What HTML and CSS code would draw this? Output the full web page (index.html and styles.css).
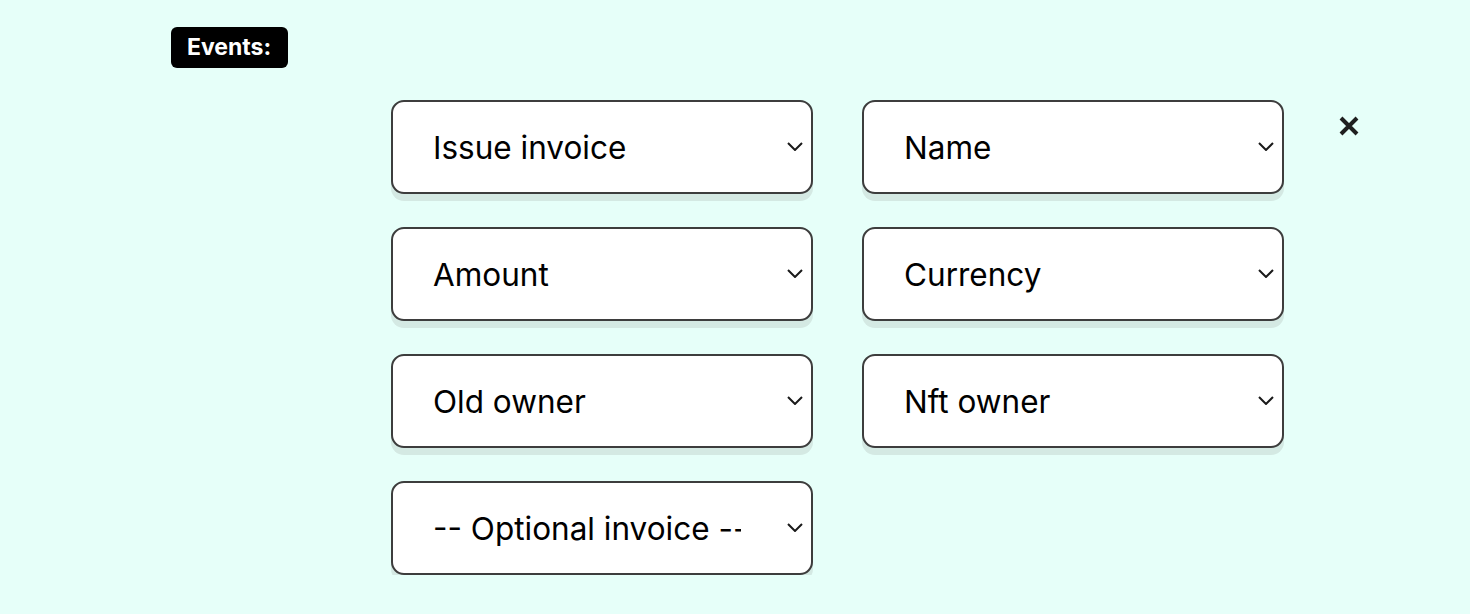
FILE: index.html
```html
<!DOCTYPE html>
<html lang="en">
<head>
<meta charset="utf-8">
<title>Events</title>
<link rel="stylesheet" href="styles.css">
</head>
<body>
<main class="page">
  <span class="badge">Events:</span>
  <div class="event-row">
    <div class="fields">
      <div class="field"><select class="select"><option>Issue invoice</option></select><svg class="chev" viewBox="0 0 16 9"><path d="M1 1l7 7 7-7"/></svg></div>
      <div class="field"><select class="select"><option>Name</option></select><svg class="chev" viewBox="0 0 16 9"><path d="M1 1l7 7 7-7"/></svg></div>
      <div class="field"><select class="select"><option>Amount</option></select><svg class="chev" viewBox="0 0 16 9"><path d="M1 1l7 7 7-7"/></svg></div>
      <div class="field"><select class="select"><option>Currency</option></select><svg class="chev" viewBox="0 0 16 9"><path d="M1 1l7 7 7-7"/></svg></div>
      <div class="field"><select class="select"><option>Old owner</option></select><svg class="chev" viewBox="0 0 16 9"><path d="M1 1l7 7 7-7"/></svg></div>
      <div class="field"><select class="select"><option>Nft owner</option></select><svg class="chev" viewBox="0 0 16 9"><path d="M1 1l7 7 7-7"/></svg></div>
      <div class="field"><select class="select"><option>-- Optional invoice --</option></select><svg class="chev" viewBox="0 0 16 9"><path d="M1 1l7 7 7-7"/></svg></div>
    </div>
    <button class="close" aria-label="Remove"><svg viewBox="0 0 22 22"><path d="M3 3l16 16M19 3L3 19"/></svg></button>
  </div>
</main>
</body>
</html>
```
FILE: styles.css
```css
html, body {
  margin: 0;
  background: #e6fff9;
}
.page {
  padding: 27px 0 0 171px;
  font-family: Inter, "Noto Sans", sans-serif;
}
.badge {
  display: inline-block;
  background: #000;
  color: #fff;
  font-family: Inter, "Liberation Sans", sans-serif;
  font-weight: 700;
  font-size: 23px;
  line-height: 41px;
  height: 41px;
  padding: 0 17px 0 16px;
  border-radius: 6px;
}
.event-row {
  display: flex;
  align-items: flex-start;
  margin: 32px 0 0 220px;
}
.fields {
  display: grid;
  grid-template-columns: 422px 422px;
  column-gap: 49px;
  row-gap: 33px;
}
.field {
  position: relative;
  height: 94px;
}
.select {
  appearance: none;
  -webkit-appearance: none;
  width: 100%;
  height: 94px;
  box-sizing: border-box;
  border: 2px solid #3d3d3d;
  border-radius: 13px;
  background: #fff;
  box-shadow: 0 7px 0 #d4e9e3;
  padding: 0 70px 0 40px;
  font-family: Inter, "Noto Sans", sans-serif;
  font-size: 31.5px;
  color: #000;
  outline: none;
}
.chev {
  position: absolute;
  right: 10px;
  top: 42px;
  width: 16px;
  height: 9px;
  pointer-events: none;
  fill: none;
  stroke: #1a1a1a;
  stroke-width: 2;
}
.close {
  margin: 15px 0 0 54px;
  padding: 0;
  width: 22px;
  height: 22px;
  border: none;
  background: none;
}
.close svg {
  display: block;
  width: 22px;
  height: 22px;
  fill: none;
  stroke: #1f1f1f;
  stroke-width: 4;
}
```
